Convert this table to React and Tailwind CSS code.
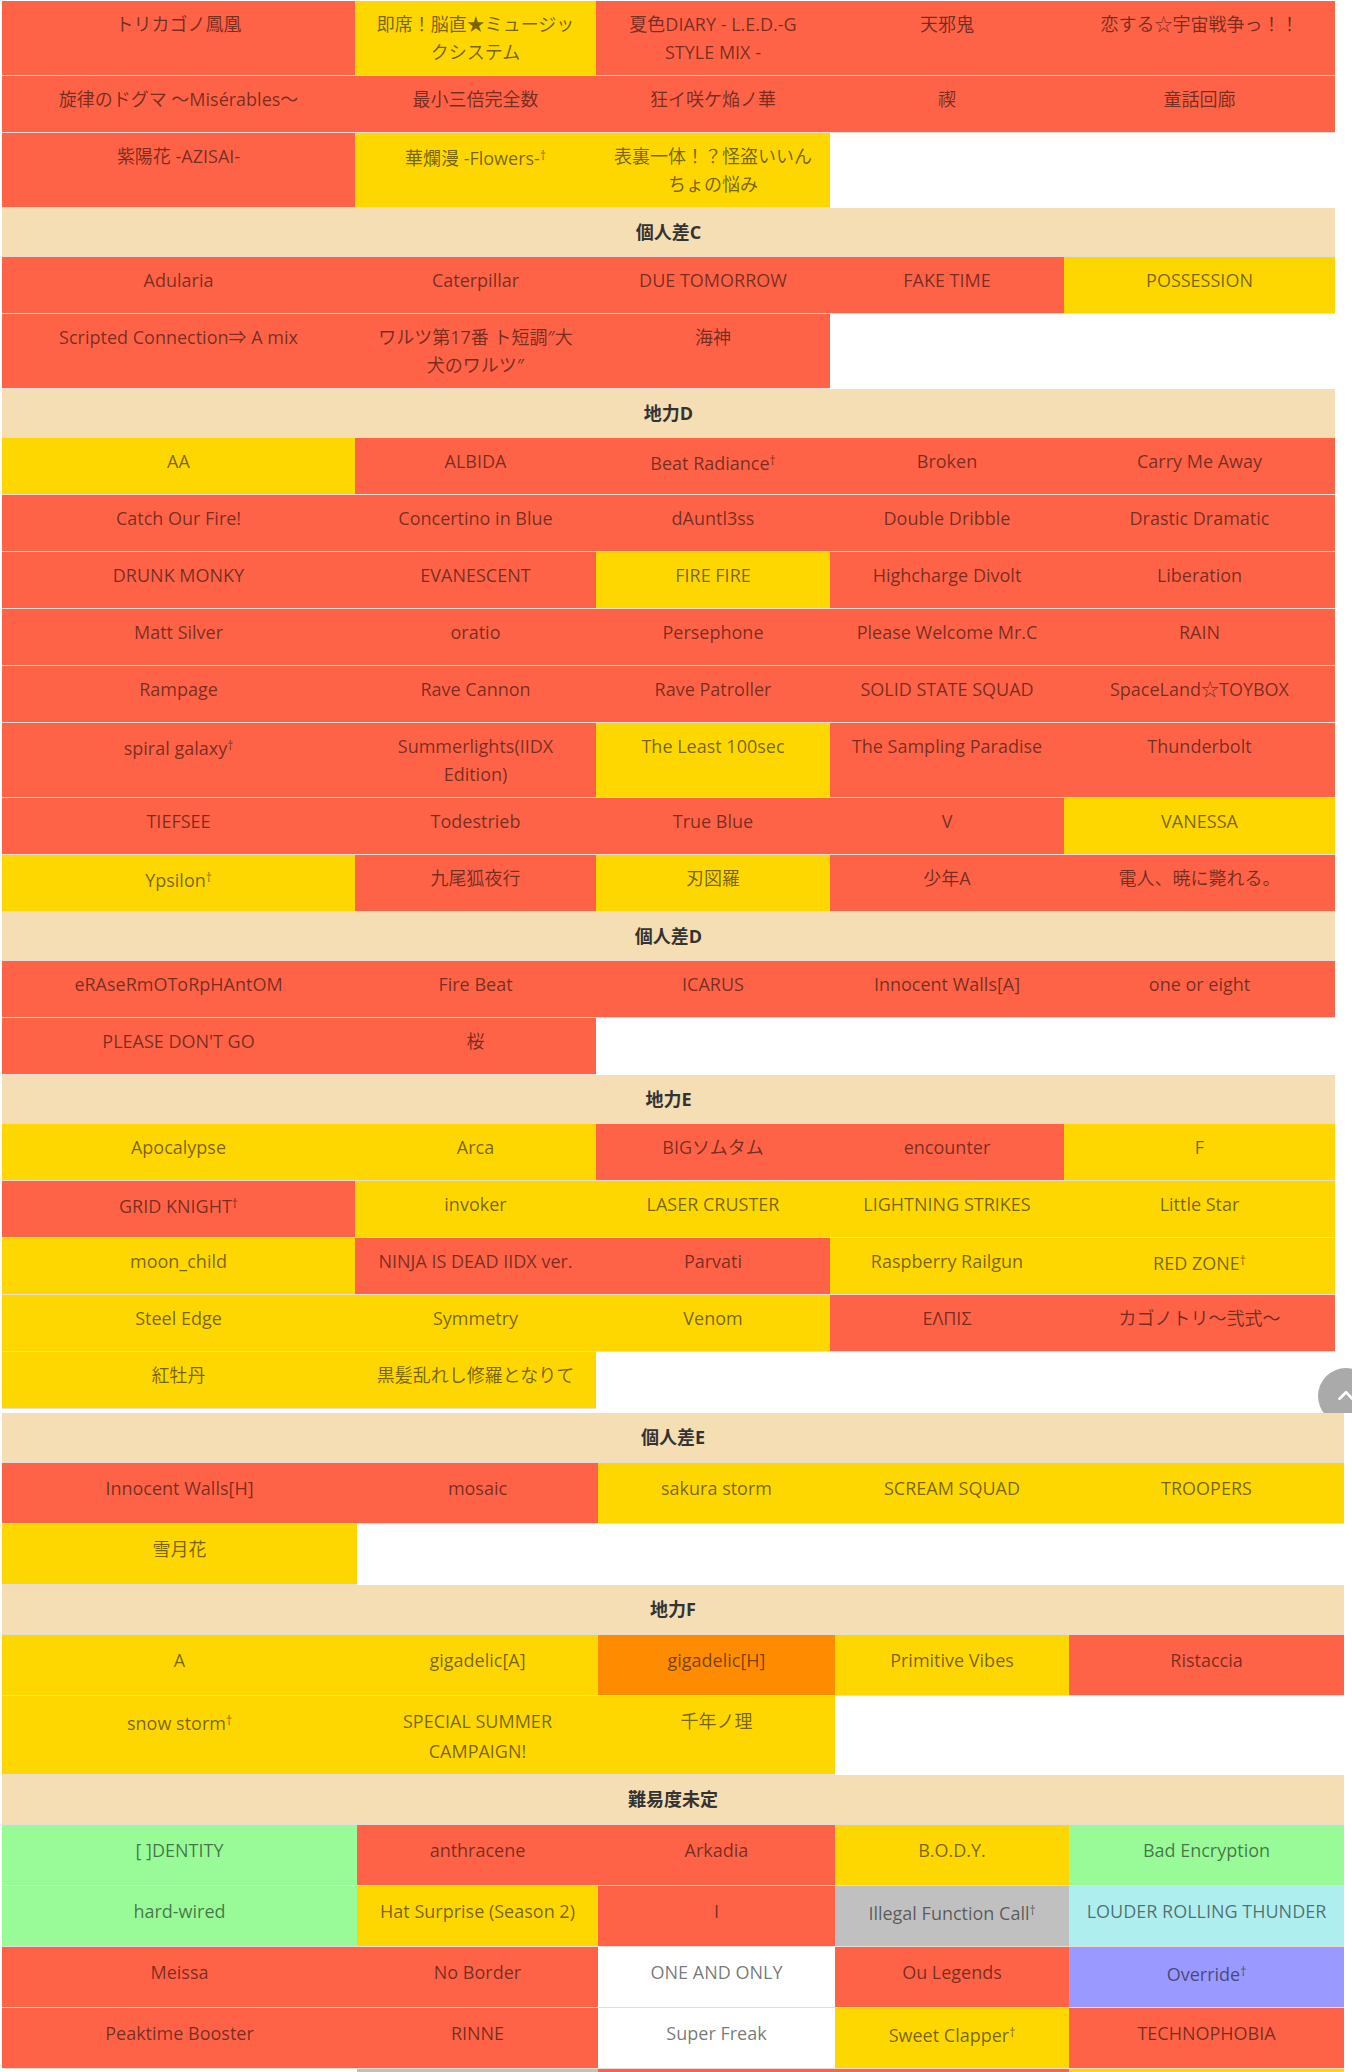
import React from "react";

const R = "bg-[#ff6347]";
const Y = "bg-[#ffd700]";
const W = "bg-white";
const G = "bg-[#98fb98]";
const C = "bg-[#afeeee]";
const S = "bg-[#c0c0c0]";
const P = "bg-[#9999ff]";
const O = "bg-[#ff8c00]";

const T1W = ["w-[353px]", "w-[241px]", "w-[234px]", "w-[234px]", "w-[271px]"];
const T2W = ["w-[355px]", "w-[241px]", "w-[237px]", "w-[234px]", "w-[275px]"];

const table1 = [
  { rows: [
    [["トリカゴノ鳳凰", R], [["即席！脳直★ミュージッ", "クシステム"], Y], [["夏色DIARY - L.E.D.-G", "STYLE MIX -"], R], ["天邪鬼", R], ["恋する☆宇宙戦争っ！！", R]],
    [["旋律のドグマ ～Misérables～", R], ["最小三倍完全数", R], ["狂イ咲ケ焔ノ華", R], ["禊", R], ["童話回廊", R]],
    [["紫陽花 -AZISAI-", R], ["華爛漫 -Flowers-†", Y], [["表裏一体！？怪盗いいん", "ちょの悩み"], Y]],
  ] },
  { title: "個人差C", rows: [
    [["Adularia", R], ["Caterpillar", R], ["DUE TOMORROW", R], ["FAKE TIME", R], ["POSSESSION", Y]],
    [["Scripted Connection⇒ A mix", R], [["ワルツ第17番 ト短調″大", "犬のワルツ″"], R], ["海神", R]],
  ] },
  { title: "地力D", rows: [
    [["AA", Y], ["ALBIDA", R], ["Beat Radiance†", R], ["Broken", R], ["Carry Me Away", R]],
    [["Catch Our Fire!", R], ["Concertino in Blue", R], ["dAuntl3ss", R], ["Double Dribble", R], ["Drastic Dramatic", R]],
    [["DRUNK MONKY", R], ["EVANESCENT", R], ["FIRE FIRE", Y], ["Highcharge Divolt", R], ["Liberation", R]],
    [["Matt Silver", R], ["oratio", R], ["Persephone", R], ["Please Welcome Mr.C", R], ["RAIN", R]],
    [["Rampage", R], ["Rave Cannon", R], ["Rave Patroller", R], ["SOLID STATE SQUAD", R], ["SpaceLand☆TOYBOX", R]],
    [["spiral galaxy†", R], [["Summerlights(IIDX", "Edition)"], R], ["The Least 100sec", Y], ["The Sampling Paradise", R], ["Thunderbolt", R]],
    [["TIEFSEE", R], ["Todestrieb", R], ["True Blue", R], ["V", R], ["VANESSA", Y]],
    [["Ypsilon†", Y], ["九尾狐夜行", R], ["刃図羅", Y], ["少年A", R], ["電人、暁に斃れる。", R]],
  ] },
  { title: "個人差D", rows: [
    [["eRAseRmOToRpHAntOM", R], ["Fire Beat", R], ["ICARUS", R], ["Innocent Walls[A]", R], ["one or eight", R]],
    [["PLEASE DON'T GO", R], ["桜", R]],
  ] },
  { title: "地力E", rows: [
    [["Apocalypse", Y], ["Arca", Y], ["BIGソムタム", R], ["encounter", R], ["F", Y]],
    [["GRID KNIGHT†", R], ["invoker", Y], ["LASER CRUSTER", Y], ["LIGHTNING STRIKES", Y], ["Little Star", Y]],
    [["moon_child", Y], ["NINJA IS DEAD IIDX ver.", R], ["Parvati", R], ["Raspberry Railgun", Y], ["RED ZONE†", Y]],
    [["Steel Edge", Y], ["Symmetry", Y], ["Venom", Y], ["ΕΛΠΙΣ", R], ["カゴノトリ～弐式～", R]],
    [["紅牡丹", Y], ["黒髪乱れし修羅となりて", Y]],
  ] },
];

const table2 = [
  { title: "個人差E", rows: [
    [["Innocent Walls[H]", R], ["mosaic", R], ["sakura storm", Y], ["SCREAM SQUAD", Y], ["TROOPERS", Y]],
    [["雪月花", Y]],
  ] },
  { title: "地力F", rows: [
    [["A", Y], ["gigadelic[A]", Y], ["gigadelic[H]", O], ["Primitive Vibes", Y], ["Ristaccia", R]],
    [["snow storm†", Y], [["SPECIAL SUMMER", "CAMPAIGN!"], Y], ["千年ノ理", Y]],
  ] },
  { title: "難易度未定", rows: [
    [["[ ]DENTITY", G], ["anthracene", R], ["Arkadia", R], ["B.O.D.Y.", Y], ["Bad Encryption", G]],
    [["hard-wired", G], ["Hat Surprise (Season 2)", Y], ["I", R], ["Illegal Function Call†", S], ["LOUDER ROLLING THUNDER", C]],
    [["Meissa", R], ["No Border", R], ["ONE AND ONLY", W], ["Ou Legends", R], ["Override†", P]],
    [["Peaktime Booster", R], ["RINNE", R], ["Super Freak", W], ["Sweet Clapper†", Y], ["TECHNOPHOBIA", R]],
    [["", W], ["", S], ["", R], ["", R], ["", Y]],
  ] },
];

function renderText(text) {
  const parts = text.split("†");
  if (parts.length === 1) return text;
  return parts.map((p, i) => (
    <React.Fragment key={i}>
      {p}
      {i < parts.length - 1 && <span className="text-[12px] align-[5px]">†</span>}
    </React.Fragment>
  ));
}

function Cell({ text, color, width, big }) {
  const lines = Array.isArray(text) ? text : [text];
  const base = big
    ? "shrink-0 border-b border-[#e6dcd6] px-4 pt-[10px] pb-[8px] min-h-[61px] leading-[30px] text-center"
    : "shrink-0 border-b border-[#e6dcd6] px-4 pt-[9px] pb-[9px] min-h-[57px] leading-[28px] text-center";
  return (
    <div className={`${base} ${color} ${width}`}>
      {lines.map((l, i) => (
        <div key={i} className="whitespace-nowrap">{renderText(l)}</div>
      ))}
    </div>
  );
}

function Header({ title, big }) {
  return (
    <div
      className={`${big ? "h-[50px]" : "h-[49px]"} flex items-center justify-center bg-[#f5deb3] border-b border-[#e6dcd6] font-bold text-[#333] text-[18px]`}
    >
      {title}
    </div>
  );
}

function Table({ sections, widths, tableW, big }) {
  return (
    <div className={`flex flex-col ${tableW}`}>
      {sections.map((sec, si) => (
        <React.Fragment key={si}>
          {sec.title && <Header title={sec.title} big={big} />}
          {sec.rows.map((row, ri) => (
            <div key={ri} className="flex">
              {row.map(([text, color], ci) => (
                <Cell key={ci} text={text} color={color} width={widths[ci]} big={big} />
              ))}
            </div>
          ))}
        </React.Fragment>
      ))}
    </div>
  );
}

export default function App() {
  return (
    <div className="relative w-[1352px] h-[2072px] overflow-hidden bg-white font-['Open_Sans','Noto_Sans_CJK_JP',sans-serif] text-[18px] text-black/55">
      <div className="pt-[1px] pl-[2px] flex flex-col">
        <Table sections={table1} widths={T1W} tableW="w-[1333px]" />
        <div className="mt-[4px]">
          <Table sections={table2} widths={T2W} tableW="w-[1342px]" big />
        </div>
      </div>
      <div className="absolute top-[1368px] left-[1318px] w-[56px] h-[45px] overflow-hidden">
        <div className="w-[56px] h-[56px] rounded-full bg-[#aaaaaa] flex items-center justify-center">
          <svg width="22" height="22" viewBox="0 0 24 24" fill="none" stroke="white" strokeWidth="3" strokeLinecap="round" strokeLinejoin="round">
            <path d="M5 15l7-7 7 7" />
          </svg>
        </div>
      </div>
    </div>
  );
}
